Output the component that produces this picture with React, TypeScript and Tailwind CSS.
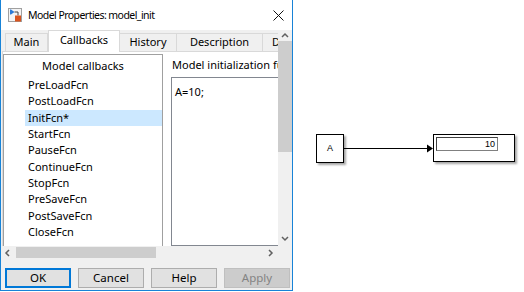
import React from "react"

const CALLBACKS = [
  "PreLoadFcn",
  "PostLoadFcn",
  "InitFcn*",
  "StartFcn",
  "PauseFcn",
  "ContinueFcn",
  "StopFcn",
  "PreSaveFcn",
  "PostSaveFcn",
  "CloseFcn",
]

const TABS = [
  { label: "Main", w: "w-[43px]" },
  { label: "Callbacks", w: "w-[72px]", active: true },
  { label: "History", w: "w-[57px]" },
  { label: "Description", w: "w-[86px]" },
  { label: "Data Import/Export", w: "w-[120px]" },
]

function Chevron({ dir }: { dir: "up" | "down" | "left" | "right" }) {
  const d = {
    up: "M1 5 L4 2 L7 5",
    down: "M1 2 L4 5 L7 2",
    left: "M5 1 L2 4 L5 7",
    right: "M2 1 L5 4 L2 7",
  }[dir]
  return (
    <svg width="8" height="8" viewBox="0 0 8 8">
      <path d={d} fill="none" stroke="#606060" strokeWidth="1.5" />
    </svg>
  )
}

function ModelIcon() {
  return (
    <svg width="14" height="14" viewBox="0 0 14 14">
      <rect x="0.5" y="0.5" width="13" height="13" fill="#f4f4f4" stroke="#a0a0a0" />
      <line x1="2.5" y1="1.5" x2="2.5" y2="6.5" stroke="#2b7bd6" />
      <path d="M3 1.5 L6.5 4 L3 6.5 Z" fill="#2b7bd6" />
      <path d="M6.5 4 H10 V7.5" fill="none" stroke="#404040" />
      <rect x="7" y="7.5" width="6" height="6" fill="#d9541e" />
    </svg>
  )
}

function Button({ label, focused, disabled }: { label: string; focused?: boolean; disabled?: boolean }) {
  return (
    <div
      className={`w-[66px] h-[20px] flex items-center justify-center text-[11.5px] leading-none border ${
        disabled
          ? "bg-[#cccccc] border-[#bfbfbf] text-[#838383]"
          : focused
            ? "bg-[#e1e1e1] border-[#0078d7] shadow-[inset_0_0_0_1px_#0078d7] text-black"
            : "bg-[#e1e1e1] border-[#adadad] text-black"
      }`}
    >
      {label}
    </div>
  )
}

export default function App() {
  return (
    <div className="flex w-[524px] h-[292px] bg-white font-['Noto_Sans',sans-serif] text-black select-none">
      {/* Dialog window */}
      <div className="flex flex-col w-[293px] h-[291px] border-x border-b border-[#1883d7] bg-[#f0f0f0]">
        {/* Title bar */}
        <div className="flex items-center h-[30px] bg-white pl-[7px] pr-[8px]">
          <ModelIcon />
          <span className="ml-[6px] text-[10.5px] tracking-[-0.55px] leading-none">Model Properties: model_init</span>
          <svg className="ml-auto" width="11" height="11" viewBox="0 0 11 11">
            <path d="M0.5 0.5 L10.5 10.5 M10.5 0.5 L0.5 10.5" stroke="#111" strokeWidth="1" />
          </svg>
        </div>

        {/* Scrollable content */}
        <div className="flex h-[216px]">
          <div className="flex flex-col w-[277px] overflow-hidden">
            {/* Tabs */}
            <div className="flex items-end h-[21px] pl-[4px] shrink-0">
              {TABS.map((t) =>
                t.active ? (
                  <div
                    key={t.label}
                    className={`${t.w} shrink-0 h-[22px] -mb-px z-10 bg-white border-x border-t border-[#d9d9d9] flex items-center justify-center text-[11px] pb-[2px]`}
                  >
                    {t.label}
                  </div>
                ) : (
                  <div
                    key={t.label}
                    className={`${t.w} shrink-0 h-[18px] bg-[#f0f0f0] border-t border-r border-[#d9d9d9] first:border-l flex items-center justify-center text-[11px] whitespace-nowrap`}
                  >
                    {t.label}
                  </div>
                )
              )}
            </div>

            {/* Tab pane */}
            <div className="flex flex-1 ml-px bg-white border-t border-l border-[#d9d9d9] min-h-0">
              {/* Callback list */}
              <div className="w-[160px] shrink-0 mt-[2px] border border-[#a0a0a0] bg-white pt-[3px] h-[220px]">
                <div className="h-[16px] leading-[16px] text-[11px] text-center">Model callbacks</div>
                <div className="mt-[3px]">
                  {CALLBACKS.map((c) => (
                    <div
                      key={c}
                      className={`ml-[21px] pl-[3px] h-[16.33px] leading-[16.33px] text-[11px] ${
                        c === "InitFcn*" ? "bg-[#cce8ff]" : ""
                      }`}
                    >
                      {c}
                    </div>
                  ))}
                </div>
              </div>

              {/* Callback editor */}
              <div className="flex flex-col ml-[8px] shrink-0 w-[200px]">
                <div className="mt-[5px] h-[16px] leading-[16px] text-[11px] pl-px whitespace-nowrap">
                  Model initialization function:
                </div>
                <div className="mt-[4px] h-[200px] border border-[#828790] bg-white pl-[3px] pt-[6px] text-[11px] leading-[16px]">
                  A=10;
                </div>
              </div>
            </div>
          </div>

          {/* Vertical scrollbar */}
          <div className="flex flex-col w-[14px] bg-[#f0f0f0]">
            <div className="h-[11px] flex items-center justify-center">
              <Chevron dir="up" />
            </div>
            <div className="h-[111px] bg-[#cdcdcd]" />
            <div className="flex-1" />
            <div className="h-[14px] flex items-center justify-center">
              <Chevron dir="down" />
            </div>
          </div>
        </div>

        {/* Horizontal scrollbar */}
        <div className="flex h-[13px]">
          <div className="flex w-[277px] items-center">
            <div className="w-[14px] flex items-center justify-center">
              <Chevron dir="left" />
            </div>
            <div className="w-[140px] h-[11px] bg-[#cdcdcd] ml-px" />
            <div className="flex-1" />
            <div className="w-[14px] flex items-center justify-center">
              <Chevron dir="right" />
            </div>
          </div>
          <div className="w-[14px]" />
        </div>

        {/* Buttons */}
        <div className="flex gap-[7px] pl-[4px] pt-[9px]">
          <Button label="OK" focused />
          <Button label="Cancel" />
          <Button label="Help" />
          <Button label="Apply" disabled />
        </div>
      </div>

      {/* Model canvas */}
      <div className="relative flex-1 font-['Liberation_Sans',sans-serif]">
        <svg className="absolute left-0 top-0" width="231" height="292">
          <line x1="50" y1="148.5" x2="135" y2="148.5" stroke="#000" strokeWidth="1" />
          <path d="M134 144.5 L140 148.5 L134 152.5 Z" fill="#000" />
        </svg>

        {/* Constant block A */}
        <div className="absolute left-[23px] top-[134px] w-[28px] h-[29px] border border-black bg-white shadow-[2px_2px_2px_rgba(0,0,0,0.35)] flex items-center justify-center text-[9px]">
          A
        </div>

        {/* Display block */}
        <div className="absolute left-[140px] top-[134px] w-[82px] h-[28px] border border-black bg-white shadow-[2px_2px_2px_rgba(0,0,0,0.35)] pl-[2px] pt-[2px]">
          <div className="w-[62px] h-[14px] border border-t-[#404040] border-l-[#404040] border-r-[#808080] border-b-[#808080] text-[9px] leading-[12px] text-right pr-[2px]">
            10
          </div>
        </div>
      </div>
    </div>
  )
}
